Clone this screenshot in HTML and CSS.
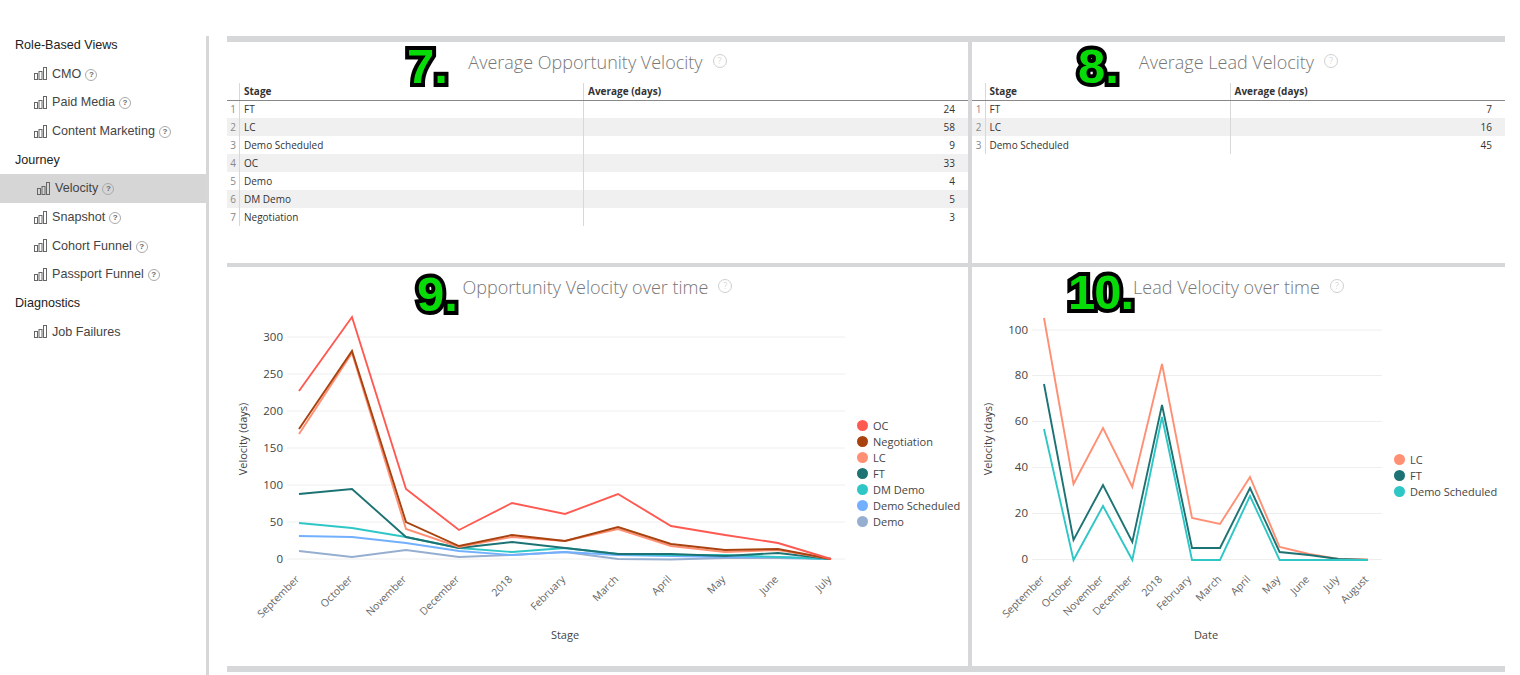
FILE: index.html
```html
<!DOCTYPE html>
<html lang="en">
<head>
    <meta charset="UTF-8">
    <title>Velocity</title>
    <link rel="stylesheet" href="styles.css">
</head>
<body>

<svg class="sprites" width="0" height="0">
    <symbol id="bars" viewBox="0 0 13 13">
        <rect x="0.5" y="6.5" width="3" height="6"></rect>
        <rect x="5" y="4.5" width="3" height="8"></rect>
        <rect x="9.5" y="0.5" width="3" height="12"></rect>
    </symbol>
</svg>

<!-- Sidebar -->
<div class="sidebar">
    <div class="nav">
        <div class="nav-head">Role-Based Views</div>
        <a class="nav-item"><svg class="bars"><use href="#bars"></use></svg>CMO<span class="help">?</span></a>
        <a class="nav-item"><svg class="bars"><use href="#bars"></use></svg>Paid Media<span class="help">?</span></a>
        <a class="nav-item"><svg class="bars"><use href="#bars"></use></svg>Content Marketing<span class="help">?</span></a>
        <div class="nav-head">Journey</div>
        <a class="nav-item active"><svg class="bars"><use href="#bars"></use></svg>Velocity<span class="help">?</span></a>
        <a class="nav-item"><svg class="bars"><use href="#bars"></use></svg>Snapshot<span class="help">?</span></a>
        <a class="nav-item"><svg class="bars"><use href="#bars"></use></svg>Cohort Funnel<span class="help">?</span></a>
        <a class="nav-item"><svg class="bars"><use href="#bars"></use></svg>Passport Funnel<span class="help">?</span></a>
        <div class="nav-head">Diagnostics</div>
        <a class="nav-item"><svg class="bars"><use href="#bars"></use></svg>Job Failures</a>
    </div>
</div>

<div class="main">
    <div class="dashboard">

        <!-- Average Opportunity Velocity -->
        <div class="panel">
            <div class="panel-title">Average Opportunity Velocity<span class="title-help">?</span></div>
            <table class="data-table opp-table">
                <tr><th class="num"></th><th>Stage</th><th>Average (days)</th></tr>
                <tr><td class="num">1</td><td>FT</td><td class="val">24</td></tr>
                <tr><td class="num">2</td><td>LC</td><td class="val">58</td></tr>
                <tr><td class="num">3</td><td>Demo Scheduled</td><td class="val">9</td></tr>
                <tr><td class="num">4</td><td>OC</td><td class="val">33</td></tr>
                <tr><td class="num">5</td><td>Demo</td><td class="val">4</td></tr>
                <tr><td class="num">6</td><td>DM Demo</td><td class="val">5</td></tr>
                <tr><td class="num">7</td><td>Negotiation</td><td class="val">3</td></tr>
            </table>
            <span class="badge badge-7">7.</span>
        </div>

        <!-- Average Lead Velocity -->
        <div class="panel">
            <div class="panel-title">Average Lead Velocity<span class="title-help">?</span></div>
            <table class="data-table lead-table">
                <tr><th class="num"></th><th>Stage</th><th>Average (days)</th></tr>
                <tr><td class="num">1</td><td>FT</td><td class="val">7</td></tr>
                <tr><td class="num">2</td><td>LC</td><td class="val">16</td></tr>
                <tr><td class="num">3</td><td>Demo Scheduled</td><td class="val">45</td></tr>
            </table>
            <span class="badge badge-8">8.</span>
        </div>

        <!-- Opportunity Velocity over time -->
        <div class="panel">
            <div class="panel-title">Opportunity Velocity over time<span class="title-help">?</span></div>
            <div class="chart-row">
                <svg class="chart opp-chart" viewBox="227 308 620 358">
                    <g class="grid">
                        <line x1="287" x2="845" y1="337" y2="337"></line>
                        <line x1="287" x2="845" y1="374" y2="374"></line>
                        <line x1="287" x2="845" y1="411" y2="411"></line>
                        <line x1="287" x2="845" y1="448" y2="448"></line>
                        <line x1="287" x2="845" y1="485" y2="485"></line>
                        <line x1="287" x2="845" y1="522" y2="522"></line>
                        <line x1="287" x2="845" y1="559" y2="559"></line>
                    </g>
                    <g class="y-ticks">
                        <text x="283" y="341">300</text>
                        <text x="283" y="378">250</text>
                        <text x="283" y="415">200</text>
                        <text x="283" y="452">150</text>
                        <text x="283" y="489">100</text>
                        <text x="283" y="526">50</text>
                        <text x="283" y="563">0</text>
                    </g>
                    <text class="axis-title" transform="translate(247 439) rotate(-90)">Velocity (days)</text>
                    <g class="x-ticks">
                        <text transform="translate(300 580) rotate(-45)">September</text>
                        <text transform="translate(353 580) rotate(-45)">October</text>
                        <text transform="translate(407 580) rotate(-45)">November</text>
                        <text transform="translate(460 580) rotate(-45)">December</text>
                        <text transform="translate(513 580) rotate(-45)">2018</text>
                        <text transform="translate(566 580) rotate(-45)">February</text>
                        <text transform="translate(619 580) rotate(-45)">March</text>
                        <text transform="translate(672 580) rotate(-45)">April</text>
                        <text transform="translate(726 580) rotate(-45)">May</text>
                        <text transform="translate(779 580) rotate(-45)">June</text>
                        <text transform="translate(832 580) rotate(-45)">July</text>
                    </g>
                    <text class="axis-title" x="565" y="639">Stage</text>
                    <g class="series">
                        <polyline class="c-demo" points="299,551 352,557 406,550 459,557 512,555 565,552 618,559 671,559.5 725,558 778,558 831,559"></polyline>
                        <polyline class="c-sched" points="299,536 352,537 406,543 459,551 512,555 565,552 618,555 671,556 725,557 778,557 831,559"></polyline>
                        <polyline class="c-dm" points="299,523 352,528 406,537 459,548 512,552 565,548 618,554 671,555 725,555 778,557 831,559"></polyline>
                        <polyline class="c-ft" points="299,494 352,489 406,537 459,548 512,542 565,548 618,554 671,554 725,556 778,553 831,559"></polyline>
                        <polyline class="c-lc" points="299,434 352,353 406,529 459,547 512,537 565,541 618,529 671,546 725,552 778,550 831,559"></polyline>
                        <polyline class="c-neg" points="299,429 352,351 406,522 459,546 512,535 565,541 618,527 671,544 725,550 778,549 831,559"></polyline>
                        <polyline class="c-oc" points="299,391 352,317 406,489 459,530 512,503 565,514 618,494 671,526 725,535 778,543 831,559"></polyline>
                    </g>
                </svg>
                <div class="legend opp-legend">
                    <div class="legend-item"><i class="dot bg-oc"></i>OC</div>
                    <div class="legend-item"><i class="dot bg-neg"></i>Negotiation</div>
                    <div class="legend-item"><i class="dot bg-lc"></i>LC</div>
                    <div class="legend-item"><i class="dot bg-ft"></i>FT</div>
                    <div class="legend-item"><i class="dot bg-dm"></i>DM Demo</div>
                    <div class="legend-item"><i class="dot bg-sched"></i>Demo Scheduled</div>
                    <div class="legend-item"><i class="dot bg-demo"></i>Demo</div>
                </div>
            </div>
            <span class="badge badge-9">9.</span>
        </div>

        <!-- Lead Velocity over time -->
        <div class="panel">
            <div class="panel-title">Lead Velocity over time<span class="title-help">?</span></div>
            <div class="chart-row">
                <svg class="chart lead-chart" viewBox="972 308 414 358">
                    <g class="grid">
                        <line x1="1032" x2="1382" y1="330" y2="330"></line>
                        <line x1="1032" x2="1382" y1="375.5" y2="375.5"></line>
                        <line x1="1032" x2="1382" y1="421.5" y2="421.5"></line>
                        <line x1="1032" x2="1382" y1="467.5" y2="467.5"></line>
                        <line x1="1032" x2="1382" y1="513.5" y2="513.5"></line>
                        <line x1="1032" x2="1382" y1="559.5" y2="559.5"></line>
                    </g>
                    <g class="y-ticks">
                        <text x="1028" y="334">100</text>
                        <text x="1028" y="379">80</text>
                        <text x="1028" y="425">60</text>
                        <text x="1028" y="471">40</text>
                        <text x="1028" y="517">20</text>
                        <text x="1028" y="563">0</text>
                    </g>
                    <text class="axis-title" transform="translate(992 439) rotate(-90)">Velocity (days)</text>
                    <g class="x-ticks">
                        <text transform="translate(1045 580) rotate(-45)">September</text>
                        <text transform="translate(1074 580) rotate(-45)">October</text>
                        <text transform="translate(1104 580) rotate(-45)">November</text>
                        <text transform="translate(1133 580) rotate(-45)">December</text>
                        <text transform="translate(1163 580) rotate(-45)">2018</text>
                        <text transform="translate(1192 580) rotate(-45)">February</text>
                        <text transform="translate(1222 580) rotate(-45)">March</text>
                        <text transform="translate(1251 580) rotate(-45)">April</text>
                        <text transform="translate(1281 580) rotate(-45)">May</text>
                        <text transform="translate(1310 580) rotate(-45)">June</text>
                        <text transform="translate(1340 580) rotate(-45)">July</text>
                        <text transform="translate(1369 580) rotate(-45)">August</text>
                    </g>
                    <text class="axis-title" x="1206" y="639">Date</text>
                    <g class="series">
                        <polyline class="c-lc" points="1044,318 1073.5,484 1103,428 1132.3,487 1162,364 1192,518 1220,524 1250,477 1279.6,547 1309,554 1338.5,559 1368,559.5"></polyline>
                        <polyline class="c-ft" points="1044,384 1073.5,540 1103,485 1132.3,542 1162,405 1192,548 1220,548 1250,488 1279.6,552 1309,555 1338.5,559 1368,560"></polyline>
                        <polyline class="c-dm" points="1044,429 1073.5,560 1103,506 1132.3,560 1162,417 1192,560 1220,560 1250,496 1279.6,560 1309,560 1338.5,560 1368,560"></polyline>
                    </g>
                </svg>
                <div class="legend lead-legend">
                    <div class="legend-item"><i class="dot bg-lc"></i>LC</div>
                    <div class="legend-item"><i class="dot bg-ft"></i>FT</div>
                    <div class="legend-item"><i class="dot bg-dm"></i>Demo Scheduled</div>
                </div>
            </div>
            <span class="badge badge-10">10.</span>
        </div>

    </div>
</div>

</body>
</html>
```

FILE: styles.css
```css
/* Basis layout */
html, body {
    height: 100%;
}

body {
    margin: 0;
    display: flex;
    background-color: #fff;
    color: #333;
    font-family: "Open Sans", sans-serif;
    overflow: hidden;
}

.sprites {
    position: absolute;
}

/* Sidebar */
.sidebar {
    width: 206px;
    margin-top: 36px;
    border-right: 3px solid #d6d7d9;
    flex-shrink: 0;
}

.nav {
    margin-top: -5.4px;
    font-family: "Liberation Sans", Arial, sans-serif;
    font-size: 12.6px;
}

.nav-head,
.nav-item {
    height: 28.7px;
    display: flex;
    align-items: center;
}

.nav-head {
    padding-left: 15px;
    color: #222;
}

.nav-item {
    padding-left: 34px;
    color: #444;
}

.nav-item.active {
    padding-left: 37px;
    background-color: #d6d6d6;
}

.bars {
    width: 13px;
    height: 13px;
    margin-right: 5px;
    fill: none;
    stroke: #666;
    stroke-width: 1;
}

.help {
    width: 10px;
    height: 10px;
    margin: 2px 0 0 4px;
    border: 1px solid #aaa;
    border-radius: 50%;
    font-size: 8px;
    font-weight: bold;
    line-height: 10px;
    text-align: center;
    color: #666;
}

/* Dashboard */
.main {
    flex: 1;
    padding: 36px 15px 3px 18px;
}

.dashboard {
    display: grid;
    grid-template-columns: 741px 533px;
    grid-template-rows: 221px 399px;
    gap: 4px;
    padding: 6px 0;
    background-color: #d6d7d9;
}

.panel {
    position: relative;
    background-color: #fff;
}

.panel-title {
    height: 40px;
    padding-bottom: 1px;
    display: flex;
    justify-content: center;
    align-items: center;
    font-size: 18px;
    font-weight: 300;
    color: #777;
}

.title-help {
    width: 12px;
    height: 12px;
    margin: -2px 0 0 10px;
    border: 1px solid #d0d0d0;
    border-radius: 50%;
    font-size: 9px;
    line-height: 12px;
    text-align: center;
    color: #c4c4c4;
}

/* Tables */
.data-table {
    width: 100%;
    table-layout: fixed;
    border-collapse: collapse;
    font-size: 10px;
}

.data-table th,
.data-table td {
    box-sizing: border-box;
    padding: 0 4px;
}

.data-table th {
    height: 17px;
    border-bottom: 1px solid #888;
    text-align: left;
    font-weight: 700;
    color: #333;
}

.data-table td {
    height: 18px;
}

.data-table th + th,
.data-table td + td {
    border-left: 1px solid #d8d8d8;
}

.data-table tr:nth-child(odd) td {
    background-color: #f0f0f0;
}

.data-table .num {
    padding: 0 3px 0 0;
    text-align: right;
    color: #888;
}

.data-table .val {
    padding-right: 13px;
    text-align: right;
}

.opp-table .num {
    width: 12.5px;
}

.opp-table th:nth-child(2) {
    width: 344px;
}

.lead-table .num {
    width: 13px;
}

.lead-table th:nth-child(2) {
    width: 245px;
}

/* Charts */
.chart-row {
    display: flex;
}

.chart {
    display: block;
    height: 358px;
    flex-shrink: 0;
}

.opp-chart {
    width: 620px;
}

.lead-chart {
    width: 414px;
}

.grid line {
    stroke: #eeeeee;
    stroke-width: 1;
}

.y-ticks text {
    font-size: 11.5px;
    text-anchor: end;
    fill: #444;
}

.x-ticks text {
    font-size: 10.5px;
    text-anchor: end;
    fill: #666;
}

.axis-title {
    font-size: 11px;
    text-anchor: middle;
    fill: #444;
}

.series polyline {
    fill: none;
    stroke-width: 1.9;
}

.c-oc { stroke: #ff5a52; }
.c-neg { stroke: #a8430f; }
.c-lc { stroke: #ff9074; }
.c-ft { stroke: #1d7373; }
.c-dm { stroke: #2fc6c6; }
.c-sched { stroke: #72b0ff; }
.c-demo { stroke: #96aed0; }

.bg-oc { background-color: #ff5a52; }
.bg-neg { background-color: #a8430f; }
.bg-lc { background-color: #ff9074; }
.bg-ft { background-color: #1d7373; }
.bg-dm { background-color: #2fc6c6; }
.bg-sched { background-color: #72b0ff; }
.bg-demo { background-color: #96aed0; }

.legend {
    font-size: 11px;
    color: #444;
}

.opp-legend {
    padding: 109px 0 0 10px;
}

.lead-legend {
    padding: 143px 0 0 8px;
}

.legend-item {
    height: 16px;
    display: flex;
    align-items: center;
    white-space: nowrap;
}

.dot {
    width: 11px;
    height: 11px;
    margin-right: 5px;
    border-radius: 50%;
}

/* Big numbers pasted over the panels */
.badge {
    position: absolute;
    font-family: "Liberation Sans", Arial, sans-serif;
    font-size: 49px;
    font-weight: 700;
    line-height: 49px;
    color: #08dc08;
    -webkit-text-stroke: 8px #000;
    paint-order: stroke fill;
    stroke-linejoin: round;
    text-shadow: 0 1px 3px rgba(0, 0, 0, 0.4);
}

.badge-7 {
    left: 180px;
    top: 0;
}

.badge-8 {
    left: 106px;
    top: 0;
}

.badge-9 {
    left: 190px;
    top: 3px;
}

.badge-10 {
    left: 96px;
    top: 1px;
    letter-spacing: -1px;
}
```
